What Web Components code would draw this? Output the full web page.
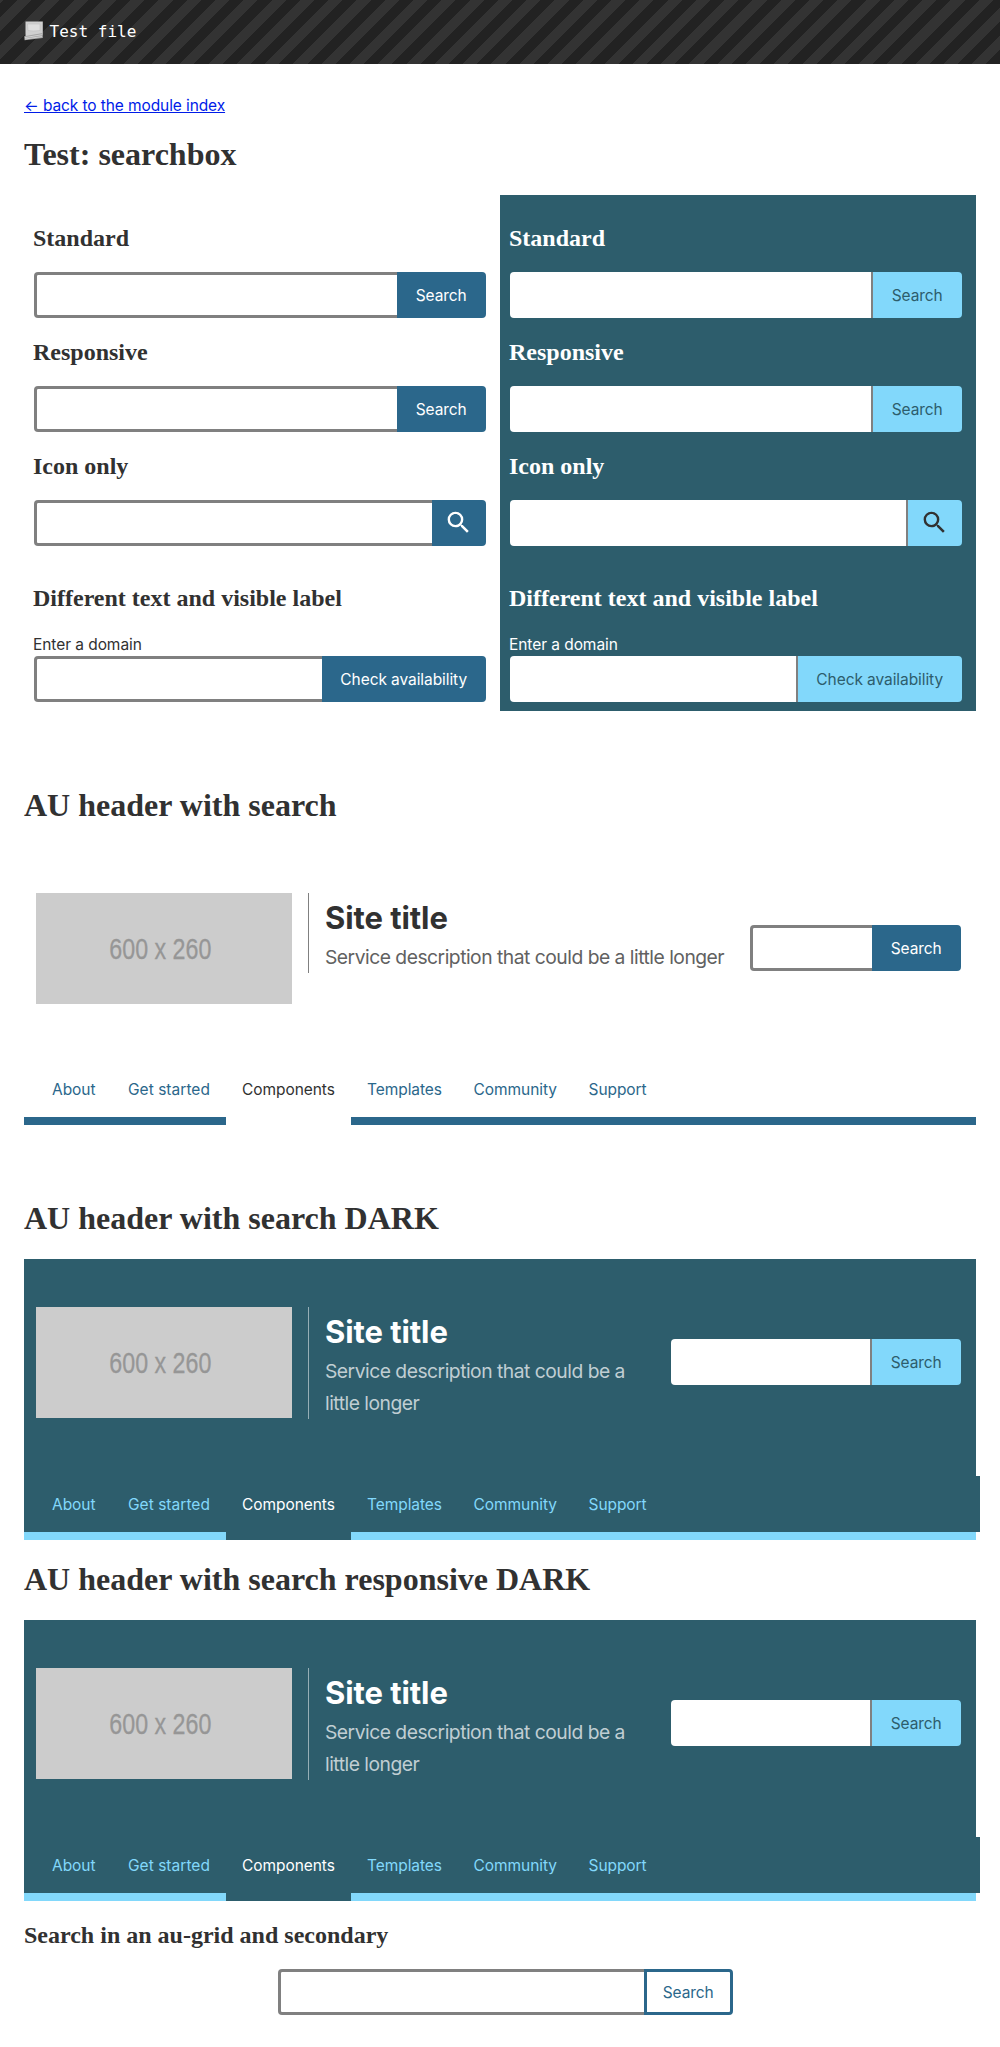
<!DOCTYPE html>
<html lang="en">
<head>
<meta charset="utf-8">
<title>Test: searchbox</title>
<style>
  body { margin: 0; background: #fff; color: #313131; font: 15.5px/24px Inter, "Liberation Sans", sans-serif; letter-spacing: -0.06px; }
</style>
</head>
<body>
<test-page></test-page>

<template id="t-banner">
  <style>
    :host { display: flex; align-items: center; box-sizing: border-box; height: 64px; padding: 0 24px; color: #fff;
      background: repeating-linear-gradient(-45deg, #222, #222 10px, #333 10px, #333 20px);
      font: 16px/24px "DejaVu Sans Mono", monospace; letter-spacing: 0; }
    svg { display: block; margin: 0 5.6px 3px 0; }
  </style>
  <svg width="20" height="20" viewBox="0 0 20 20" aria-hidden="true">
    <path d="M1.5 0.5H18.8V14L1.5 16Z" fill="#cfcfcf"/>
    <path d="M3.5 3H16V9.5Q9 10.5 4 9.5Z" fill="#dedede" stroke="#bfbfbf" stroke-width=".6"/>
    <path d="M0.2 15.2L18.8 12V17L0.6 19.2Z" fill="#a5a5a5"/>
    <path d="M1 16.6L18 13.7M1 18L18 15.6" stroke="#dadada" stroke-width=".8"/>
  </svg>
  <slot></slot>
</template>

<template id="t-heading">
  <style>
    :host { display: block; }
    h1, h2 { margin: 0; font-family: "Liberation Serif", "Times New Roman", serif; font-weight: 700; letter-spacing: 0; }
    h1 { font-size: 32px; line-height: 48px; }
    h2 { font-size: 24px; line-height: 36px; }
  </style>
</template>

<template id="t-search">
  <style>
    :host { display: block; --edge: #808080; --fill: #2b678b; --ink: #fff; --line: #2b678b; }
    :host([dark]) { --fill: #82d8fb; --ink: #2d5d6c; --line: #82d8fb; }
    :host([secondary]) { --fill: #fff; --ink: #2b678b; }
    form { display: flex; height: 46px; margin: 0; }
    label { display: block; box-sizing: border-box; height: 24px; padding-top: 1px; margin-left: -1px; }
    input { flex: 1; min-width: 0; box-sizing: border-box; margin: 0; padding: 0 12px; outline: 0; appearance: none; background: #fff;
      border: 3px solid var(--edge); border-right: 0; border-radius: 4px 0 0 4px; }
    label[hidden] { display: none; }
    :host([dark]) input { border: 0; border-right: 2px solid var(--edge); }
    button { flex: none; box-sizing: border-box; width: var(--button, 89px); margin: 0; padding: 2px 0.6px 0 0; display: flex; align-items: center; justify-content: center;
      border: 3px solid var(--line); border-radius: 0 4px 4px 0; background: var(--fill); color: var(--ink); font: inherit; letter-spacing: -0.08px; white-space: nowrap; }
    svg { display: block; width: 29px; height: 29px; fill: #fff; margin: 0 0 3px; }
    :host([dark]) svg { fill: #313131; }
  </style>
  <label hidden></label>
  <form role="search"><input type="search" aria-label="Search"><button type="button"></button></form>
</template>

<template id="t-nav">
  <style>
    :host { display: block; height: 56px; --bar: #2b678b; --ink: #2b678b; --bg: #fff; --on: #313131; border-bottom: 8px solid var(--bar); }
    :host([dark]) { --bar: #82d8fb; --ink: #82d8fb; --bg: #2d5d6c; --on: #fff; }
    ul { display: flex; list-style: none; margin: 0 -4px 0 12px; padding: 0; height: 56px; background: var(--bg); }
    li { flex: none; box-sizing: border-box; height: 64px; padding: 17px 0 0 16px; color: var(--ink); }
    li.on { color: var(--on); background: var(--bg); }
  </style>
  <ul>
    <li style="width:76px">About</li><li style="width:114px;letter-spacing:.03px">Get started</li><li class="on" style="width:125px">Components</li>
    <li style="width:106.5px">Templates</li><li style="width:115px">Community</li><li>Support</li>
  </ul>
</template>

<template id="t-header">
  <style>
    :host { display: block; --sub: #616161; --rule: #808080; }
    :host([dark]) { background: #2d5d6c; color: #fff; --sub: #c0ced3; --rule: #96aeb6; }
    .row { display: flex; align-items: flex-start; padding: 48px 15px 57px 12px; }
    svg { display: block; flex: none; background: #ccc; }
    .text { box-sizing: border-box; width: 425px; margin-left: 16px; padding: 1px 0 0 16px; border-left: 1px solid var(--rule); }
    :host([dark]) .text { width: 328px; }
    .title { font-size: 31px; line-height: 47px; font-weight: 700; letter-spacing: -0.08px; }
    .sub { font-size: 19.3px; line-height: 32px; letter-spacing: -0.5px; color: var(--sub); }
    au-searchbox { width: 211px; margin: 32px 0 0 auto; }
    :host([dark]) au-searchbox { width: 290px; }
  </style>
  <div class="row">
    <svg width="256" height="111" viewBox="0 0 256 111" role="img"><text x="73.3" y="66.3" textLength="102" lengthAdjust="spacingAndGlyphs" font-family="Liberation Sans, Arial, sans-serif" font-size="29" letter-spacing="0" fill="#969696" stroke="#969696" stroke-width=".3">600 x 260</text></svg>
    <div class="text"><div class="title">Site title</div><div class="sub">Service description that could be a little longer</div></div>
    <au-searchbox></au-searchbox>
  </div>
  <slot></slot>
</template>

<template id="t-examples">
  <style>
    :host { display: block; box-sizing: border-box; padding: 25px 14px 9px 10px; }
    :host([dark]) { background: #2d5d6c; color: #fff; }
    test-heading { margin-left: -1px; }
    au-searchbox { margin: 16px 0; --button: 89px; }
    .icon { margin-bottom: 34px; --button: 54px; }
    .domain { margin-bottom: 0; --button: 164px; }
  </style>
  <test-heading level="2">Standard</test-heading>
  <au-searchbox></au-searchbox>
  <test-heading level="2">Responsive</test-heading>
  <au-searchbox></au-searchbox>
  <test-heading level="2">Icon only</test-heading>
  <au-searchbox class="icon" icon></au-searchbox>
  <test-heading level="2">Different text and visible label</test-heading>
  <au-searchbox class="domain" label="Enter a domain" text="Check availability"></au-searchbox>
</template>

<template id="t-page">
  <style>
    :host { display: block; }
    main { padding: 30px 24px 32px; }
    a { display: inline-block; color: #001ce8; letter-spacing: -0.1px; text-decoration: underline; }
    .back { height: 24px; margin-bottom: 12px; }
    .grid { display: grid; grid-template-columns: 1fr 1fr; margin: 17px 0 70px; }
    .plain { margin: 16px 0 69px; }
    .first { margin: 17px 0 15px; }
    .second { margin: 17px 0 16px; }
    .offset { width: 455px; margin: 16px 0 0 254px; }
  </style>
  <test-banner>Test file</test-banner>
  <main>
    <div class="back"><a href="#">← back to the module index</a></div>
    <test-heading level="1">Test: searchbox</test-heading>
    <div class="grid"><search-examples></search-examples><search-examples dark></search-examples></div>
    <test-heading level="1">AU header with search</test-heading>
    <au-header class="plain"><au-main-nav></au-main-nav></au-header>
    <test-heading level="1">AU header with search DARK</test-heading>
    <au-header class="first" dark><au-main-nav dark></au-main-nav></au-header>
    <test-heading level="1">AU header with search responsive DARK</test-heading>
    <au-header class="second" dark><au-main-nav dark></au-main-nav></au-header>
    <test-heading level="2">Search in an au-grid and secondary</test-heading>
    <au-searchbox class="offset" secondary></au-searchbox>
  </main>
</template>

<script>
  class Base extends HTMLElement {
    connectedCallback() {
      if (this.shadowRoot) return;
      const root = this.attachShadow({ mode: "open" });
      root.append(document.getElementById(this.constructor.template).content.cloneNode(true));
      this.setup(root);
    }
    setup() {}
  }
  // Hands the dark theme on to the search boxes inside.
  const passDark = (host, root) => {
    if (host.hasAttribute("dark")) root.querySelectorAll("au-searchbox").forEach(s => s.setAttribute("dark", ""));
  };

  class TestBanner extends Base { static template = "t-banner"; }

  class TestHeading extends Base {
    static template = "t-heading";
    setup(root) {
      const h = document.createElement("h" + this.getAttribute("level"));
      h.append(document.createElement("slot"));
      root.append(h);
    }
  }

  class AuSearchbox extends Base {
    static template = "t-search";
    setup(root) {
      const button = root.querySelector("button");
      if (this.hasAttribute("icon")) {
        button.setAttribute("aria-label", "Search");
        button.innerHTML = '<svg viewBox="0 0 24 24"><path d="M15.5 14h-.79l-.28-.27A6.471 6.471 0 0 0 16 9.5 6.5 6.5 0 1 0 9.5 16c1.61 0 3.09-.59 4.23-1.57l.27.28v.79l5 4.99L20.49 19l-4.99-5zm-6 0C7.01 14 5 11.99 5 9.5S7.01 5 9.5 5 14 7.01 14 9.5 11.99 14 9.5 14z"/></svg>';
      } else button.textContent = this.getAttribute("text") || "Search";
      if (this.hasAttribute("label")) {
        const label = root.querySelector("label");
        label.hidden = false;
        label.textContent = this.getAttribute("label");
      }
    }
  }

  class AuMainNav extends Base { static template = "t-nav"; }
  class AuHeader extends Base { static template = "t-header"; setup(root) { passDark(this, root); } }
  class SearchExamples extends Base { static template = "t-examples"; setup(root) { passDark(this, root); } }
  class TestPage extends Base { static template = "t-page"; }

  customElements.define("test-banner", TestBanner);
  customElements.define("test-heading", TestHeading);
  customElements.define("au-searchbox", AuSearchbox);
  customElements.define("au-main-nav", AuMainNav);
  customElements.define("au-header", AuHeader);
  customElements.define("search-examples", SearchExamples);
  customElements.define("test-page", TestPage);
</script>
</body>
</html>
